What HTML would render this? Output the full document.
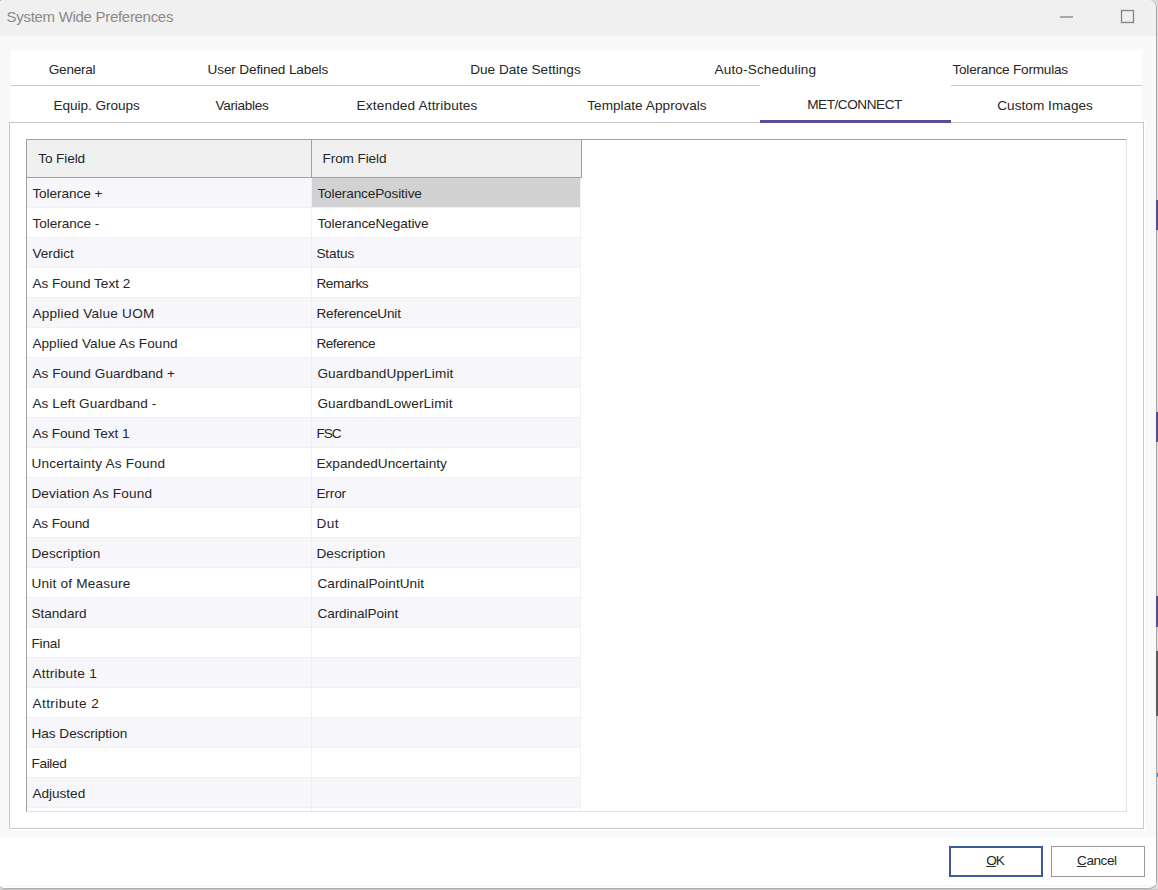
<!DOCTYPE html><html><head><meta charset="utf-8"><title>System Wide Preferences</title><style>
*{box-sizing:border-box;margin:0;padding:0}
html,body{width:1158px;height:890px;overflow:hidden;background:#dcdcdc}
body{font-family:"Liberation Sans",sans-serif;font-size:13.6px;color:#1a1a1a;position:relative}
.abs{position:absolute}
.t{position:absolute;white-space:nowrap;line-height:20px;height:20px}
#win{left:-3px;top:0;width:1160px;height:889px;background:#f8f9fb;border-radius:8px;overflow:hidden;border-right:1px solid #a8a8a8;border-bottom:1px solid #adadad}
#title{left:0;top:0;width:1160px;height:36px;background:#f0f0f0}
#footer{left:0;top:837px;width:1160px;height:48px;background:#fff}
#tabs{left:11px;top:50px;width:1131px;height:73px;background:#fff}
#panel{left:9px;top:122px;width:1135px;height:707px;background:#fff;border:1px solid #c8c8c8;box-shadow:1px 1px 0 #fff}
#grid{left:26px;top:139px;width:1101px;height:673px;background:#fff;border:1px solid #e3e3e3;border-top-color:#a0a0a0;border-left-color:#a0a0a0;overflow:hidden}
.row{position:absolute;left:0;width:554px;height:30px;border-bottom:1px solid #f0f0f0}
.row.alt{background:#f6f6fb}
.row .c1{position:absolute;left:0;top:0;width:285px;height:29px;border-right:1px solid #f0f0f0}
.row .c2{position:absolute;left:285px;top:0;width:269px;height:29px;border-right:1px solid #f0f0f0}
.hdr{position:absolute;top:0;height:38px;background:#f0f0f0;border-right:1px solid #a0a0a0;border-bottom:1px solid #a0a0a0}
.btn{position:absolute;top:846px;height:31px;background:#fff}
</style></head><body>
<div id="win" class="abs"></div>
<div id="title" class="abs" style="left:0;width:1156px;border-radius:0 8px 0 0">
<div class="abs" style="left:1060px;top:16px;width:13px;height:2px;background:#a8a8a8"></div>
<div class="abs" style="left:1121px;top:10px;width:13px;height:13px;border:1px solid #858585;box-shadow:inset 0 0 0 1px rgba(120,120,120,0.18),0 0 0 1px rgba(120,120,120,0.12)"></div>
</div>
<div id="footer" class="abs" style="width:1156px"></div>
<div class="abs" style="left:3px;top:887px;width:1145px;height:1px;background:#fff"></div>
<div class="abs" style="left:0;top:0;width:1px;height:1px;background:#b4b4b4"></div>
<div id="tabs" class="abs">
<div class="abs" style="left:0;top:35px;width:749px;height:1px;background:#c6c6c6"></div>
<div class="abs" style="left:940px;top:35px;width:191px;height:1px;background:#c6c6c6"></div>
</div>
<div id="panel" class="abs"></div>
<div class="abs" style="left:760px;top:120px;width:191px;height:3px;background:#5c4c9c"></div>
<div id="grid" class="abs">
<div class="hdr" style="left:0;width:285px"></div>
<div class="hdr" style="left:285px;width:270px"></div>
<div class="row alt" style="top:38px"><div class="c1"></div><div class="c2" style="background:#d2d2d2"></div></div>
<div class="row" style="top:68px"><div class="c1"></div><div class="c2"></div></div>
<div class="row alt" style="top:98px"><div class="c1"></div><div class="c2"></div></div>
<div class="row" style="top:128px"><div class="c1"></div><div class="c2"></div></div>
<div class="row alt" style="top:158px"><div class="c1"></div><div class="c2"></div></div>
<div class="row" style="top:188px"><div class="c1"></div><div class="c2"></div></div>
<div class="row alt" style="top:218px"><div class="c1"></div><div class="c2"></div></div>
<div class="row" style="top:248px"><div class="c1"></div><div class="c2"></div></div>
<div class="row alt" style="top:278px"><div class="c1"></div><div class="c2"></div></div>
<div class="row" style="top:308px"><div class="c1"></div><div class="c2"></div></div>
<div class="row alt" style="top:338px"><div class="c1"></div><div class="c2"></div></div>
<div class="row" style="top:368px"><div class="c1"></div><div class="c2"></div></div>
<div class="row alt" style="top:398px"><div class="c1"></div><div class="c2"></div></div>
<div class="row" style="top:428px"><div class="c1"></div><div class="c2"></div></div>
<div class="row alt" style="top:458px"><div class="c1"></div><div class="c2"></div></div>
<div class="row" style="top:488px"><div class="c1"></div><div class="c2"></div></div>
<div class="row alt" style="top:518px"><div class="c1"></div><div class="c2"></div></div>
<div class="row" style="top:548px"><div class="c1"></div><div class="c2"></div></div>
<div class="row alt" style="top:578px"><div class="c1"></div><div class="c2"></div></div>
<div class="row" style="top:608px"><div class="c1"></div><div class="c2"></div></div>
<div class="row alt" style="top:638px"><div class="c1"></div><div class="c2"></div></div>
<div class="row" style="top:668px"><div class="c1"></div><div class="c2"></div></div>
</div>
<div class="btn" style="left:949px;width:94px;border:2px solid #3d5b99"></div>
<div class="btn" style="left:1051px;width:94px;border:1px solid #999"></div>
<span class="t" id="ttl" style="left:6.60px;top:6.84px;font-size:15.00px;color:#8b8b8b;letter-spacing:-0.299px">System Wide Preferences</span>
<span class="t" id="ta0" style="left:48.80px;top:60.11px;font-size:13.60px;color:#262626;letter-spacing:-0.255px">General</span>
<span class="t" id="ta1" style="left:207.60px;top:60.11px;font-size:13.60px;color:#262626;letter-spacing:-0.140px">User Defined Labels</span>
<span class="t" id="ta2" style="left:470.20px;top:60.11px;font-size:13.60px;color:#262626;letter-spacing:0.011px">Due Date Settings</span>
<span class="t" id="ta3" style="left:714.60px;top:60.11px;font-size:13.60px;color:#262626;letter-spacing:0.122px">Auto-Scheduling</span>
<span class="t" id="ta4" style="left:952.40px;top:60.11px;font-size:13.60px;color:#262626;letter-spacing:-0.212px">Tolerance Formulas</span>
<span class="t" id="tb0" style="left:53.40px;top:96.41px;font-size:13.60px;color:#262626;letter-spacing:-0.045px">Equip. Groups</span>
<span class="t" id="tb1" style="left:215.40px;top:96.41px;font-size:13.60px;color:#262626;letter-spacing:-0.281px">Variables</span>
<span class="t" id="tb2" style="left:356.60px;top:96.41px;font-size:13.60px;color:#262626;letter-spacing:0.160px">Extended Attributes</span>
<span class="t" id="tb3" style="left:587.20px;top:96.41px;font-size:13.60px;color:#262626;letter-spacing:0.048px">Template Approvals</span>
<span class="t" id="tb4" style="left:807.20px;top:95.41px;font-size:13.60px;color:#262626;letter-spacing:-0.450px">MET/CONNECT</span>
<span class="t" id="tb5" style="left:997.20px;top:96.41px;font-size:13.60px;color:#262626;letter-spacing:0.045px">Custom Images</span>
<span class="t" id="h0" style="left:38.20px;top:149.11px;font-size:13.60px;color:#262626;letter-spacing:-0.090px">To Field</span>
<span class="t" id="h1" style="left:322.60px;top:149.11px;font-size:13.60px;color:#262626;letter-spacing:-0.120px">From Field</span>
<span class="t" id="l0" style="left:32.40px;top:183.91px;font-size:13.60px;color:#262626;letter-spacing:-0.072px">Tolerance +</span>
<span class="t" id="r0" style="left:317.40px;top:183.91px;font-size:13.60px;color:#262626;letter-spacing:-0.129px">TolerancePositive</span>
<span class="t" id="l1" style="left:32.40px;top:213.91px;font-size:13.60px;color:#262626;letter-spacing:-0.036px">Tolerance -</span>
<span class="t" id="r1" style="left:317.40px;top:213.91px;font-size:13.60px;color:#262626;letter-spacing:-0.084px">ToleranceNegative</span>
<span class="t" id="l2" style="left:32.40px;top:243.91px;font-size:13.60px;color:#262626;letter-spacing:-0.030px">Verdict</span>
<span class="t" id="r2" style="left:316.40px;top:243.91px;font-size:13.60px;color:#262626;letter-spacing:-0.126px">Status</span>
<span class="t" id="l3" style="left:32.40px;top:273.91px;font-size:13.60px;color:#262626;letter-spacing:-0.006px">As Found Text 2</span>
<span class="t" id="r3" style="left:316.40px;top:273.91px;font-size:13.60px;color:#262626;letter-spacing:-0.360px">Remarks</span>
<span class="t" id="l4" style="left:32.40px;top:303.91px;font-size:13.60px;color:#262626;letter-spacing:0.219px">Applied Value UOM</span>
<span class="t" id="r4" style="left:316.40px;top:303.91px;font-size:13.60px;color:#262626;letter-spacing:-0.195px">ReferenceUnit</span>
<span class="t" id="l5" style="left:32.40px;top:333.91px;font-size:13.60px;color:#262626;letter-spacing:0.051px">Applied Value As Found</span>
<span class="t" id="r5" style="left:316.40px;top:333.91px;font-size:13.60px;color:#262626;letter-spacing:-0.450px">Reference</span>
<span class="t" id="l6" style="left:32.40px;top:363.91px;font-size:13.60px;color:#262626;letter-spacing:0.047px">As Found Guardband +</span>
<span class="t" id="r6" style="left:317.40px;top:363.91px;font-size:13.60px;color:#262626;letter-spacing:0.120px">GuardbandUpperLimit</span>
<span class="t" id="l7" style="left:32.40px;top:393.91px;font-size:13.60px;color:#262626;letter-spacing:0.080px">As Left Guardband -</span>
<span class="t" id="r7" style="left:317.40px;top:393.91px;font-size:13.60px;color:#262626;letter-spacing:0.075px">GuardbandLowerLimit</span>
<span class="t" id="l8" style="left:32.40px;top:423.91px;font-size:13.60px;color:#262626;letter-spacing:-0.064px">As Found Text 1</span>
<span class="t" id="r8" style="left:316.40px;top:423.91px;font-size:13.60px;color:#262626;letter-spacing:-1.000px">FSC</span>
<span class="t" id="l9" style="left:31.40px;top:453.91px;font-size:13.60px;color:#262626;letter-spacing:0.189px">Uncertainty As Found</span>
<span class="t" id="r9" style="left:316.40px;top:453.91px;font-size:13.60px;color:#262626;letter-spacing:0.025px">ExpandedUncertainty</span>
<span class="t" id="l10" style="left:31.40px;top:483.91px;font-size:13.60px;color:#262626;letter-spacing:0.164px">Deviation As Found</span>
<span class="t" id="r10" style="left:316.40px;top:483.91px;font-size:13.60px;color:#262626;letter-spacing:-0.113px">Error</span>
<span class="t" id="l11" style="left:32.40px;top:513.91px;font-size:13.60px;color:#262626;letter-spacing:-0.129px">As Found</span>
<span class="t" id="r11" style="left:316.40px;top:513.91px;font-size:13.60px;color:#262626;letter-spacing:0.450px">Dut</span>
<span class="t" id="l12" style="left:31.40px;top:543.91px;font-size:13.60px;color:#262626;letter-spacing:0.090px">Description</span>
<span class="t" id="r12" style="left:316.40px;top:543.91px;font-size:13.60px;color:#262626;letter-spacing:0.090px">Description</span>
<span class="t" id="l13" style="left:31.40px;top:573.91px;font-size:13.60px;color:#262626;letter-spacing:0.219px">Unit of Measure</span>
<span class="t" id="r13" style="left:317.40px;top:573.91px;font-size:13.60px;color:#262626;letter-spacing:0.056px">CardinalPointUnit</span>
<span class="t" id="l14" style="left:31.40px;top:603.91px;font-size:13.60px;color:#262626;letter-spacing:0.000px">Standard</span>
<span class="t" id="r14" style="left:317.40px;top:603.91px;font-size:13.60px;color:#262626;letter-spacing:-0.067px">CardinalPoint</span>
<span class="t" id="l15" style="left:31.40px;top:633.91px;font-size:13.60px;color:#262626;letter-spacing:-0.158px">Final</span>
<span class="t" id="l16" style="left:32.40px;top:663.91px;font-size:13.60px;color:#262626;letter-spacing:0.234px">Attribute 1</span>
<span class="t" id="l17" style="left:32.40px;top:693.91px;font-size:13.60px;color:#262626;letter-spacing:0.450px">Attribute 2</span>
<span class="t" id="l18" style="left:31.40px;top:723.91px;font-size:13.60px;color:#262626;letter-spacing:-0.006px">Has Description</span>
<span class="t" id="l19" style="left:31.40px;top:753.91px;font-size:13.60px;color:#262626;letter-spacing:-0.306px">Failed</span>
<span class="t" id="l20" style="left:32.40px;top:783.91px;font-size:13.60px;color:#262626;letter-spacing:-0.013px">Adjusted</span>
<span class="t" id="ok" style="left:986.20px;top:850.91px;font-size:13.60px;color:#262626;letter-spacing:-1.000px"><u>O</u>K</span>
<span class="t" id="cn" style="left:1077.00px;top:850.91px;font-size:13.60px;color:#262626;letter-spacing:-0.450px"><u>C</u>ancel</span>
<div class="abs" style="left:1156px;top:200px;width:2px;height:30px;background:#5c4c9c;border-left:1px solid #564889"></div>
<div class="abs" style="left:1156px;top:412px;width:2px;height:30px;background:#5c4c9c;border-left:1px solid #564889"></div>
<div class="abs" style="left:1156px;top:596px;width:2px;height:31px;background:#5c4c9c;border-left:1px solid #564889"></div>
<div class="abs" style="left:1156px;top:651px;width:2px;height:65px;background:#5e5e5e;border-left:1px solid #595959"></div>
<div class="abs" style="left:1157px;top:773px;width:1px;height:4px;background:#4a7fc0"></div>
<div class="abs" style="left:0;top:889px;width:1158px;height:1px;background:#c8c8c8"></div>
</body></html>
